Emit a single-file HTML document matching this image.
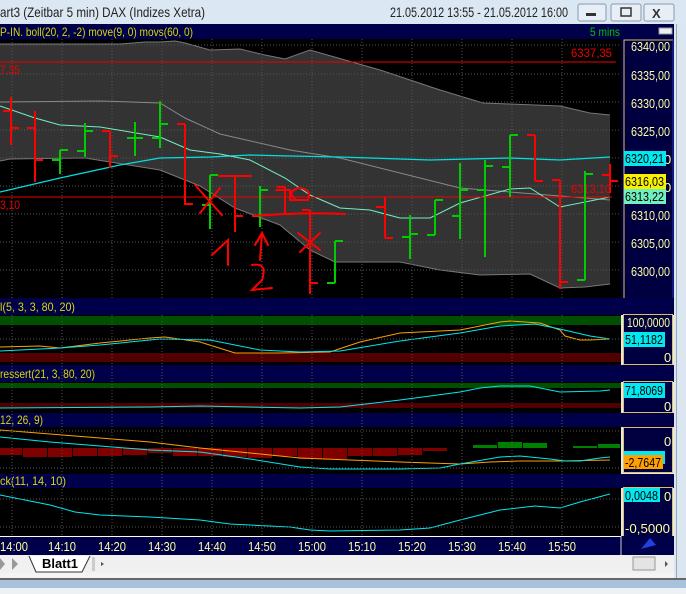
<!DOCTYPE html>
<html><head><meta charset="utf-8"><style>
html,body{margin:0;padding:0;width:686px;height:594px;overflow:hidden;background:#dfe8f3}
svg{display:block}
text{font-family:"Liberation Sans",sans-serif}
</style></head><body>
<svg width="686" height="594" viewBox="0 0 686 594" xmlns="http://www.w3.org/2000/svg">
<rect x="0" y="0" width="686" height="24" fill="#dce7f4"/>
<text x="0" y="17" font-size="14" fill="#222" textLength="205" lengthAdjust="spacingAndGlyphs">art3 (Zeitbar 5 min)  DAX (Indizes Xetra)</text>
<text x="390" y="17" font-size="14" fill="#222" textLength="178" lengthAdjust="spacingAndGlyphs">21.05.2012 13:55 - 21.05.2012 16:00</text>
<rect x="578" y="4" width="28" height="17" rx="2" fill="#e8eef6" stroke="#8a9ab0"/>
<rect x="586" y="13" width="10" height="3" fill="#333"/>
<rect x="611" y="4" width="30" height="17" rx="2" fill="#e8eef6" stroke="#8a9ab0"/>
<rect x="621" y="8" width="10" height="8" fill="none" stroke="#333" stroke-width="1.5"/>
<rect x="644" y="4" width="30" height="17" rx="2" fill="#e8eef6" stroke="#8a9ab0"/>
<text x="652" y="18" font-size="13" font-weight="bold" fill="#333">X</text>
<rect x="674" y="24" width="12" height="556" fill="#dce6f0"/>
<line x1="676.5" y1="24" x2="676.5" y2="578" stroke="#9aa8b8"/>
<rect x="0" y="24" width="674" height="15" fill="#00004a"/>
<text x="0" y="36" font-size="12" fill="#d8d800" textLength="193" lengthAdjust="spacingAndGlyphs">P-IN. boll(20, 2, -2) move(9, 0) movs(60, 0)</text>
<text x="590" y="36" font-size="12" fill="#00c000" textLength="30" lengthAdjust="spacingAndGlyphs">5 mins</text>
<rect x="659" y="28" width="13" height="6" fill="#eee" stroke="#999"/>
<rect x="0" y="39" width="621" height="259" fill="#000"/>
<polygon fill="#333" points="0,44 120,44 145,42 160,42 175,41 185,43 210,50 240,49 265,55 285,59 310,50 345,60 380,70 410,80 440,90 483,103 510,104 560,106 590,113 610,115 610,284 585,287 560,288 530,274 480,275 440,270 400,262 335,262 310,250 280,225 235,208 200,186 160,170 85,158 10,159 0,161"/>
<polyline fill="none" stroke="#777" points="0,44 120,44 145,42 160,42 175,41 185,43 210,50 240,49 265,55 285,59 310,50 345,60 380,70 410,80 440,90 483,103 510,104 560,106 590,113 610,115"/>
<polyline fill="none" stroke="#777" points="0,161 10,159 85,158 160,170 200,186 235,208 280,225 310,250 335,262 400,262 440,270 480,275 530,274 560,288 585,287 610,284"/>
<g stroke="#555" stroke-dasharray="1,2">
<line x1="12" y1="39" x2="12" y2="298"/><line x1="62" y1="39" x2="62" y2="298"/><line x1="112" y1="39" x2="112" y2="298"/><line x1="162" y1="39" x2="162" y2="298"/><line x1="212" y1="39" x2="212" y2="298"/><line x1="262" y1="39" x2="262" y2="298"/><line x1="312" y1="39" x2="312" y2="298"/><line x1="362" y1="39" x2="362" y2="298"/><line x1="412" y1="39" x2="412" y2="298"/><line x1="462" y1="39" x2="462" y2="298"/><line x1="512" y1="39" x2="512" y2="298"/><line x1="562" y1="39" x2="562" y2="298"/>
<line x1="0" y1="45" x2="621" y2="45"/><line x1="0" y1="74" x2="621" y2="74"/><line x1="0" y1="102" x2="621" y2="102"/><line x1="0" y1="130" x2="621" y2="130"/><line x1="0" y1="158" x2="621" y2="158"/><line x1="0" y1="186" x2="621" y2="186"/><line x1="0" y1="214" x2="621" y2="214"/><line x1="0" y1="242" x2="621" y2="242"/><line x1="0" y1="270" x2="621" y2="270"/>
</g>
<polyline fill="none" stroke="#888" points="0,102 100,101 160,103 185,118 220,134 290,150 340,158 420,178 460,188 560,196 610,200"/>
<polyline fill="none" stroke="#00e0e0" stroke-width="1.3" points="0,192 60,178 120,165 160,158 210,157 250,155 290,156 340,157 430,160 510,158 560,160 610,157"/>
<polyline fill="none" stroke="#70f0c0" points="0,106 35,118 60,125 100,127 160,137 190,150 220,154 250,160 285,178 310,195 340,208 370,210 400,218 430,218 460,203 510,189 530,188 560,207 610,197"/>
<line x1="0" y1="62" x2="616" y2="62" stroke="#e00" />
<line x1="0" y1="197" x2="612" y2="197" stroke="#e00"/>
<text x="571" y="57" font-size="12" fill="#e00" textLength="41" lengthAdjust="spacingAndGlyphs">6337,35</text>
<text x="0" y="74" font-size="12" fill="#e00" textLength="20" lengthAdjust="spacingAndGlyphs">7,35</text>
<text x="0" y="209" font-size="12" fill="#e00" textLength="20" lengthAdjust="spacingAndGlyphs">3,10</text>
<text x="571" y="193" font-size="12" fill="#e00" textLength="40" lengthAdjust="spacingAndGlyphs">6313,10</text>
<g stroke-width="2" fill="none">
<path stroke="#f00" d="M11,97V145M3,111H11M11,128H19"/>
<path stroke="#f00" d="M35,111V182M27,128H35M35,160H43"/>
<path stroke="#0c0" d="M60,150V174M52,160H60M60,150H68"/>
<path stroke="#0c0" d="M85,123V157M77,151H85M85,131H93"/>
<path stroke="#f00" d="M110,131V168M102,131H110M110,156H118"/>
<path stroke="#0c0" d="M135,122V156M127,138H135M135,138H143"/>
<path stroke="#0c0" d="M160,101V148M152,138H160M160,124H168"/>
<path stroke="#f00" d="M185,124V205M177,124H185M185,204H193"/>
<path stroke="#0c0" d="M210,175V229M202,205H210M210,175H218"/>
<path stroke="#f00" d="M235,176V232M218,176H252M235,216H243"/>
<path stroke="#0c0" d="M260,186V227M252,216H260M260,190H268"/>
<path stroke="#f00" d="M285,187V215M277,187H285M285,214H293"/>
<path stroke="#f00" d="M310,210V294M302,210H310M310,283H318"/>
<path stroke="#0c0" d="M335,241V283M327,283H335M335,241H343"/>
<path stroke="#f00" d="M385,197V238M376,207H385M385,238H393"/>
<path stroke="#0c0" d="M410,215V259M402,237H410M410,234H418"/>
<path stroke="#0c0" d="M435,200V235M427,235H435M435,200H443"/>
<path stroke="#0c0" d="M460,163V239M452,216H460M460,190H468"/>
<path stroke="#0c0" d="M485,160V257M477,190H485M485,166H493"/>
<path stroke="#0c0" d="M510,135V197M502,167H510M510,135H518"/>
<path stroke="#f00" d="M535,135V181M527,135H535M535,181H543"/>
<path stroke="#f00" d="M560,180V289M552,180H560M560,282H568"/>
<path stroke="#0c0" d="M585,171V280M577,280H585M585,174H593"/>
<path stroke="#f00" d="M610,164V193M602,175H610M610,181H618"/>
</g>
<g stroke="#f00" stroke-width="2" fill="none" stroke-linecap="round">
<path d="M195,185L222,215M220,188L200,213"/>
<path d="M212,255L228,240L228,265"/>
<path d="M255,245L262,233L268,245M262,233L260,260"/>
<path d="M252,265Q268,262 262,280L252,290L272,288"/>
<path d="M276,190H290V200H308Q312,188 298,188Q286,192 296,200"/>
<path d="M253,216Q300,212 345,214"/>
<path d="M298,233L320,250M320,233L300,252"/>
<path d="M327,300H340L336,310L344,318L328,326"/>
</g>
<rect x="621" y="39" width="53" height="259" fill="#000040"/>
<path d="M624,298V40H673" stroke="#e0c060" fill="none"/>
<line x1="673" y1="40" x2="673" y2="298" stroke="#2030c0"/>
<g font-size="13" fill="#ffffa0">
<text x="631" y="51" textLength="39" lengthAdjust="spacingAndGlyphs">6340,00</text><text x="631" y="80" textLength="39" lengthAdjust="spacingAndGlyphs">6335,00</text><text x="631" y="108" textLength="39" lengthAdjust="spacingAndGlyphs">6330,00</text><text x="631" y="136" textLength="39" lengthAdjust="spacingAndGlyphs">6325,00</text><text x="664" y="164">0</text><text x="664" y="192">0</text><text x="631" y="220" textLength="39" lengthAdjust="spacingAndGlyphs">6310,00</text><text x="631" y="248" textLength="39" lengthAdjust="spacingAndGlyphs">6305,00</text><text x="631" y="276" textLength="39" lengthAdjust="spacingAndGlyphs">6300,00</text>
</g>
<rect x="624" y="151" width="42" height="15" fill="#00e8f0"/><text x="625" y="163" font-size="13" fill="#000" textLength="39" lengthAdjust="spacingAndGlyphs">6320,21</text>
<rect x="624" y="174" width="42" height="15" fill="#f8f000"/><text x="625" y="186" font-size="13" fill="#000" textLength="39" lengthAdjust="spacingAndGlyphs">6316,03</text>
<rect x="624" y="189" width="42" height="15" fill="#70f0c0"/><text x="625" y="201" font-size="13" fill="#000" textLength="39" lengthAdjust="spacingAndGlyphs">6313,22</text>
<rect x="0" y="298" width="674" height="17" fill="#00004a"/>
<text x="0" y="311" font-size="12" fill="#d8d800" textLength="75" lengthAdjust="spacingAndGlyphs">l(5, 3, 3, 80, 20)</text>
<rect x="0" y="315" width="621" height="50" fill="#000"/>
<rect x="0" y="316" width="621" height="9" fill="#005000"/>
<rect x="0" y="353" width="621" height="9" fill="#500000"/>
<polyline fill="none" stroke="#ffa000" points="0,347 40,346 60,348 100,343 150,338 165,337 200,342 235,353 280,353 330,352 360,342 400,333 460,330 500,322 510,321 540,323 560,330 565,336 580,340 590,340 610,339"/>
<polyline fill="none" stroke="#00e8f0" points="0,351 60,348 100,345 160,339 210,340 260,350 300,352 340,351 400,341 460,333 500,326 535,324 560,329 590,336 610,339"/>
<rect x="0" y="365" width="674" height="17" fill="#00004a"/>
<text x="0" y="378" font-size="12" fill="#d8d800" textLength="95" lengthAdjust="spacingAndGlyphs">ressert(21, 3, 80, 20)</text>
<rect x="0" y="382" width="621" height="31" fill="#000"/>
<rect x="0" y="383" width="621" height="5" fill="#005000"/>
<rect x="0" y="403" width="621" height="5" fill="#500000"/>
<polyline fill="none" stroke="#00e8f0" points="0,408 150,407 200,406 300,408 340,407 400,400 460,392 480,388 500,386 530,386 550,390 560,392 600,391 610,390"/>
<rect x="0" y="413" width="674" height="14" fill="#00004a"/>
<text x="0" y="424" font-size="12" fill="#d8d800" textLength="43" lengthAdjust="spacingAndGlyphs">12, 26, 9)</text>
<rect x="0" y="427" width="621" height="47" fill="#000"/>
<path fill="#800000" d="M0,448H22V455H0ZM23,448H47V457H23ZM48,448H72V457H48ZM73,448H97V456H73ZM98,448H122V456H98ZM123,448H147V455H123ZM148,448H172V453H148ZM173,448H197V456H173ZM198,448H222V456H198ZM223,448H247V457H223ZM248,448H272V458H248ZM273,448H297V456H273ZM298,448H322V459H298ZM323,448H347V459H323ZM348,448H372V456H348ZM373,448H397V456H373ZM398,448H422V455H398ZM423,448H447V451H423Z"/>
<path fill="#008000" d="M473,445H497V448H473ZM498,442H522V448H498ZM523,443H547V448H523ZM573,446H597V448H573ZM598,444H620V448H598Z"/>
<polyline fill="none" stroke="#ffa000" points="0,430 50,434 100,438 150,442 200,448 250,453 300,458 350,460 400,462 460,464 490,462 520,461 560,461 610,460"/>
<polyline fill="none" stroke="#00e8f0" points="0,437 50,442 100,446 150,450 200,452 250,459 300,467 330,469 400,469 440,468 460,464 500,457 520,456 550,459 565,461 580,461 600,458 610,457"/>
<rect x="0" y="474" width="674" height="14" fill="#00004a"/>
<text x="0" y="485" font-size="12" fill="#d8d800" textLength="66" lengthAdjust="spacingAndGlyphs">ck(11, 14, 10)</text>
<rect x="0" y="488" width="621" height="48" fill="#000"/>
<polyline fill="none" stroke="#00e8f0" points="0,495 50,505 75,512 100,515 150,517 200,520 230,524 250,525 290,527 310,530 330,531 400,530 430,528 460,520 500,510 535,506 560,508 580,502 610,494"/>
<g stroke="#555" stroke-dasharray="1,2">
<line x1="12" y1="315" x2="12" y2="536"/><line x1="62" y1="315" x2="62" y2="536"/><line x1="112" y1="315" x2="112" y2="536"/><line x1="162" y1="315" x2="162" y2="536"/><line x1="212" y1="315" x2="212" y2="536"/><line x1="262" y1="315" x2="262" y2="536"/><line x1="312" y1="315" x2="312" y2="536"/><line x1="362" y1="315" x2="362" y2="536"/><line x1="412" y1="315" x2="412" y2="536"/><line x1="462" y1="315" x2="462" y2="536"/><line x1="512" y1="315" x2="512" y2="536"/><line x1="562" y1="315" x2="562" y2="536"/>
<line x1="0" y1="339" x2="621" y2="339"/><line x1="0" y1="499" x2="621" y2="499"/><line x1="0" y1="527" x2="621" y2="527"/><line x1="0" y1="431" x2="621" y2="431"/><line x1="0" y1="468" x2="621" y2="468"/>
</g>
<g fill="#000040" stroke="#e0c060">
<rect x="623.5" y="314.5" width="49" height="50"/><rect x="623.5" y="381.5" width="49" height="31"/><rect x="623.5" y="427.5" width="49" height="45"/><rect x="623.5" y="487.5" width="49" height="49"/>
</g>
<g font-size="13" fill="#ffffa0">
<text x="627" y="327" textLength="43" lengthAdjust="spacingAndGlyphs">100,0000</text><text x="664" y="362">0</text><text x="664" y="411">0</text><text x="664" y="446">0</text><text x="664" y="501">0</text><text x="625" y="533" textLength="45" lengthAdjust="spacingAndGlyphs">-0,5000</text>
</g>
<rect x="624" y="332" width="41" height="15" fill="#00e8f0"/><text x="625" y="344" font-size="13" fill="#000" textLength="38" lengthAdjust="spacingAndGlyphs">51,1182</text>
<rect x="624" y="383" width="41" height="15" fill="#00e8f0"/><text x="625" y="395" font-size="13" fill="#000" textLength="38" lengthAdjust="spacingAndGlyphs">71,8069</text>
<rect x="624" y="451" width="41" height="13" fill="#00e8f0"/>
<rect x="624" y="455" width="39" height="14" fill="#ffa000"/><text x="625" y="467" font-size="13" fill="#000" textLength="36" lengthAdjust="spacingAndGlyphs">-2,7647</text>
<rect x="624" y="488" width="36" height="14" fill="#00e8f0"/><text x="625" y="500" font-size="13" fill="#000" textLength="33" lengthAdjust="spacingAndGlyphs">0,0048</text>
<rect x="0" y="536" width="674" height="19" fill="#00004a"/>
<line x1="0" y1="536.5" x2="621" y2="536.5" stroke="#fff"/>
<line x1="621" y1="536" x2="621" y2="555" stroke="#ccc"/>
<g font-size="13" fill="#ffffa0" text-anchor="middle">
<text x="14" y="551" textLength="28" lengthAdjust="spacingAndGlyphs">14:00</text><text x="62" y="551" textLength="28" lengthAdjust="spacingAndGlyphs">14:10</text><text x="112" y="551" textLength="28" lengthAdjust="spacingAndGlyphs">14:20</text><text x="162" y="551" textLength="28" lengthAdjust="spacingAndGlyphs">14:30</text><text x="212" y="551" textLength="28" lengthAdjust="spacingAndGlyphs">14:40</text><text x="262" y="551" textLength="28" lengthAdjust="spacingAndGlyphs">14:50</text><text x="312" y="551" textLength="28" lengthAdjust="spacingAndGlyphs">15:00</text><text x="362" y="551" textLength="28" lengthAdjust="spacingAndGlyphs">15:10</text><text x="412" y="551" textLength="28" lengthAdjust="spacingAndGlyphs">15:20</text><text x="462" y="551" textLength="28" lengthAdjust="spacingAndGlyphs">15:30</text><text x="512" y="551" textLength="28" lengthAdjust="spacingAndGlyphs">15:40</text><text x="562" y="551" textLength="28" lengthAdjust="spacingAndGlyphs">15:50</text>
</g>
<path d="M641,549L650,538L656,545Z" fill="#2040e0"/>
<rect x="0" y="555" width="674" height="18" fill="#f0f0f0"/>
<path d="M0,558L5,564L0,570M12,558L18,564L12,570" fill="#999"/>
<path d="M29,556L36,572H82L90,556" fill="#fff" stroke="#333"/>
<text x="42" y="568" font-size="13" font-weight="bold" fill="#000" textLength="36" lengthAdjust="spacingAndGlyphs">Blatt1</text>
<rect x="92" y="557" width="3" height="14" fill="#ccc"/>
<path d="M104,564L101,562L101,566Z" fill="#555"/>
<rect x="633" y="557" width="22" height="13" fill="#e4e4e4" stroke="#999"/>
<path d="M665,561L668,564L665,567Z" fill="#555"/>
<rect x="0" y="573" width="674" height="5" fill="#f4f4f4"/>
<rect x="0" y="578" width="686" height="2" fill="#666"/>
<rect x="0" y="580" width="686" height="14" fill="#a8c2dc"/>
<rect x="0" y="588" width="686" height="6" fill="#eef1f4"/>
</svg>
</body></html>
